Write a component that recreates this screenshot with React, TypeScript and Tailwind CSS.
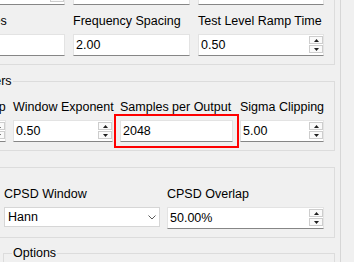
import type { ReactNode } from 'react';

function Label({ children }: { children: ReactNode }) {
  return <div className="h-[16px] whitespace-nowrap leading-[16px] text-black">{children}</div>;
}

function SpinButtons() {
  return (
    <div className="flex flex-col gap-[1px] self-stretch pt-[1px] pb-[2px]">
      <div className="flex h-[8px] w-[14px] items-center justify-center border border-[#cdcdcd] bg-[#fafafa]">
        <svg width="5" height="3" viewBox="0 0 5 3">
          <polygon points="2.5,0 5,3 0,3" fill="#1f1f1f" />
        </svg>
      </div>
      <div className="flex h-[8px] w-[14px] items-center justify-center border border-[#cdcdcd] bg-[#fafafa]">
        <svg width="5" height="3" viewBox="0 0 5 3">
          <polygon points="0,0 5,0 2.5,3" fill="#1f1f1f" />
        </svg>
      </div>
    </div>
  );
}

function LineEdit({ value, spin }: { value: string; spin?: boolean }) {
  return (
    <div className="flex h-[22px] items-center border border-[#e3e3e3] border-b-[#868686] bg-white">
      <span className="flex-1 overflow-hidden whitespace-nowrap pl-[2px] leading-[20px]">{value}</span>
      {spin && <SpinButtons />}
    </div>
  );
}

function Combo({ value }: { value: string }) {
  return (
    <div className="flex h-[20px] items-center border border-[#d6d6d6] bg-white pl-[3px] pr-[3px]">
      <span className="flex-1 whitespace-nowrap leading-[18px]">{value}</span>
      <svg width="8" height="5" viewBox="0 0 8 5">
        <polyline points="0.5,0.5 4,4 7.5,0.5" fill="none" stroke="#5a5a5a" strokeWidth="1" />
      </svg>
    </div>
  );
}

function Field({ label, children }: { label: string; children: ReactNode }) {
  return (
    <div className="flex flex-col gap-[5px]">
      <Label>{label}</Label>
      {children}
    </div>
  );
}

export default function App() {
  return (
    <div className="flex h-[262px] w-[354px] overflow-hidden bg-[#f0f0f0] font-['Liberation_Sans',Arial,sans-serif] text-[12.5px] text-black">
      <div className="w-[340px] shrink-0 overflow-hidden">
        <div className="-mt-[50px] -ml-[113px] flex w-[448px] flex-col">
          {/* Test settings */}
          <div className="flex justify-end border border-[#dcdcdc] pt-[11px] pr-[10px] pb-[8px]">
            <div className="grid grid-cols-[172px_117px_126px] gap-x-[8px] gap-y-[8px]">
              <Field label="Number of Lines">
                <LineEdit value="400" spin />
              </Field>
              <Field label="Max Frequency">
                <LineEdit value="800.00" />
              </Field>
              <Field label="Start Level">
                <LineEdit value="-6.00" />
              </Field>
              <Field label="Number of Averages">
                <LineEdit value="10" />
              </Field>
              <Field label="Frequency Spacing">
                <LineEdit value="2.00" />
              </Field>
              <Field label="Test Level Ramp Time">
                <LineEdit value="0.50" spin />
              </Field>
            </div>
          </div>

          {/* Analysis parameters */}
          <fieldset className="mt-[8px] border border-[#dcdcdc] pt-[10px] pr-[10px] pb-[8px]">
            <legend className="ml-[8px] px-[1px] leading-[16px]">Analysis Parameters</legend>
            <div className="flex justify-end">
              <div className="grid grid-cols-[92px_100px_113px_84px] gap-x-[7px]">
                <Field label="Window Overlap">
                  <LineEdit value="50.00%" spin />
                </Field>
                <Field label="Window Exponent">
                  <LineEdit value="0.50" spin />
                </Field>
                <Field label="Samples per Output">
                  <div className="relative">
                    <LineEdit value="2048" />
                    <div className="pointer-events-none absolute -inset-[6px] border-2 border-[#ff0000]" />
                  </div>
                </Field>
                <Field label="Sigma Clipping">
                  <LineEdit value="5.00" spin />
                </Field>
              </div>
            </div>
          </fieldset>

          {/* CPSD */}
          <div className="mt-[16px] flex justify-end border border-[#dcdcdc] pt-[18px] pr-[10px] pb-[8px]">
            <div className="grid grid-cols-[156px_157px] gap-x-[7px]">
              <Field label="CPSD Window">
                <Combo value="Hann" />
              </Field>
              <Field label="CPSD Overlap">
                <LineEdit value="50.00%" spin />
              </Field>
            </div>
          </div>

          {/* Options */}
          <fieldset className="mt-[7px] ml-[116px] h-[80px] border border-[#dcdcdc]">
            <legend className="ml-[8px] px-[1px] leading-[16px]">Options</legend>
          </fieldset>
        </div>
      </div>
      <div className="w-px shrink-0 bg-[#d6d6d6]" />
    </div>
  );
}
